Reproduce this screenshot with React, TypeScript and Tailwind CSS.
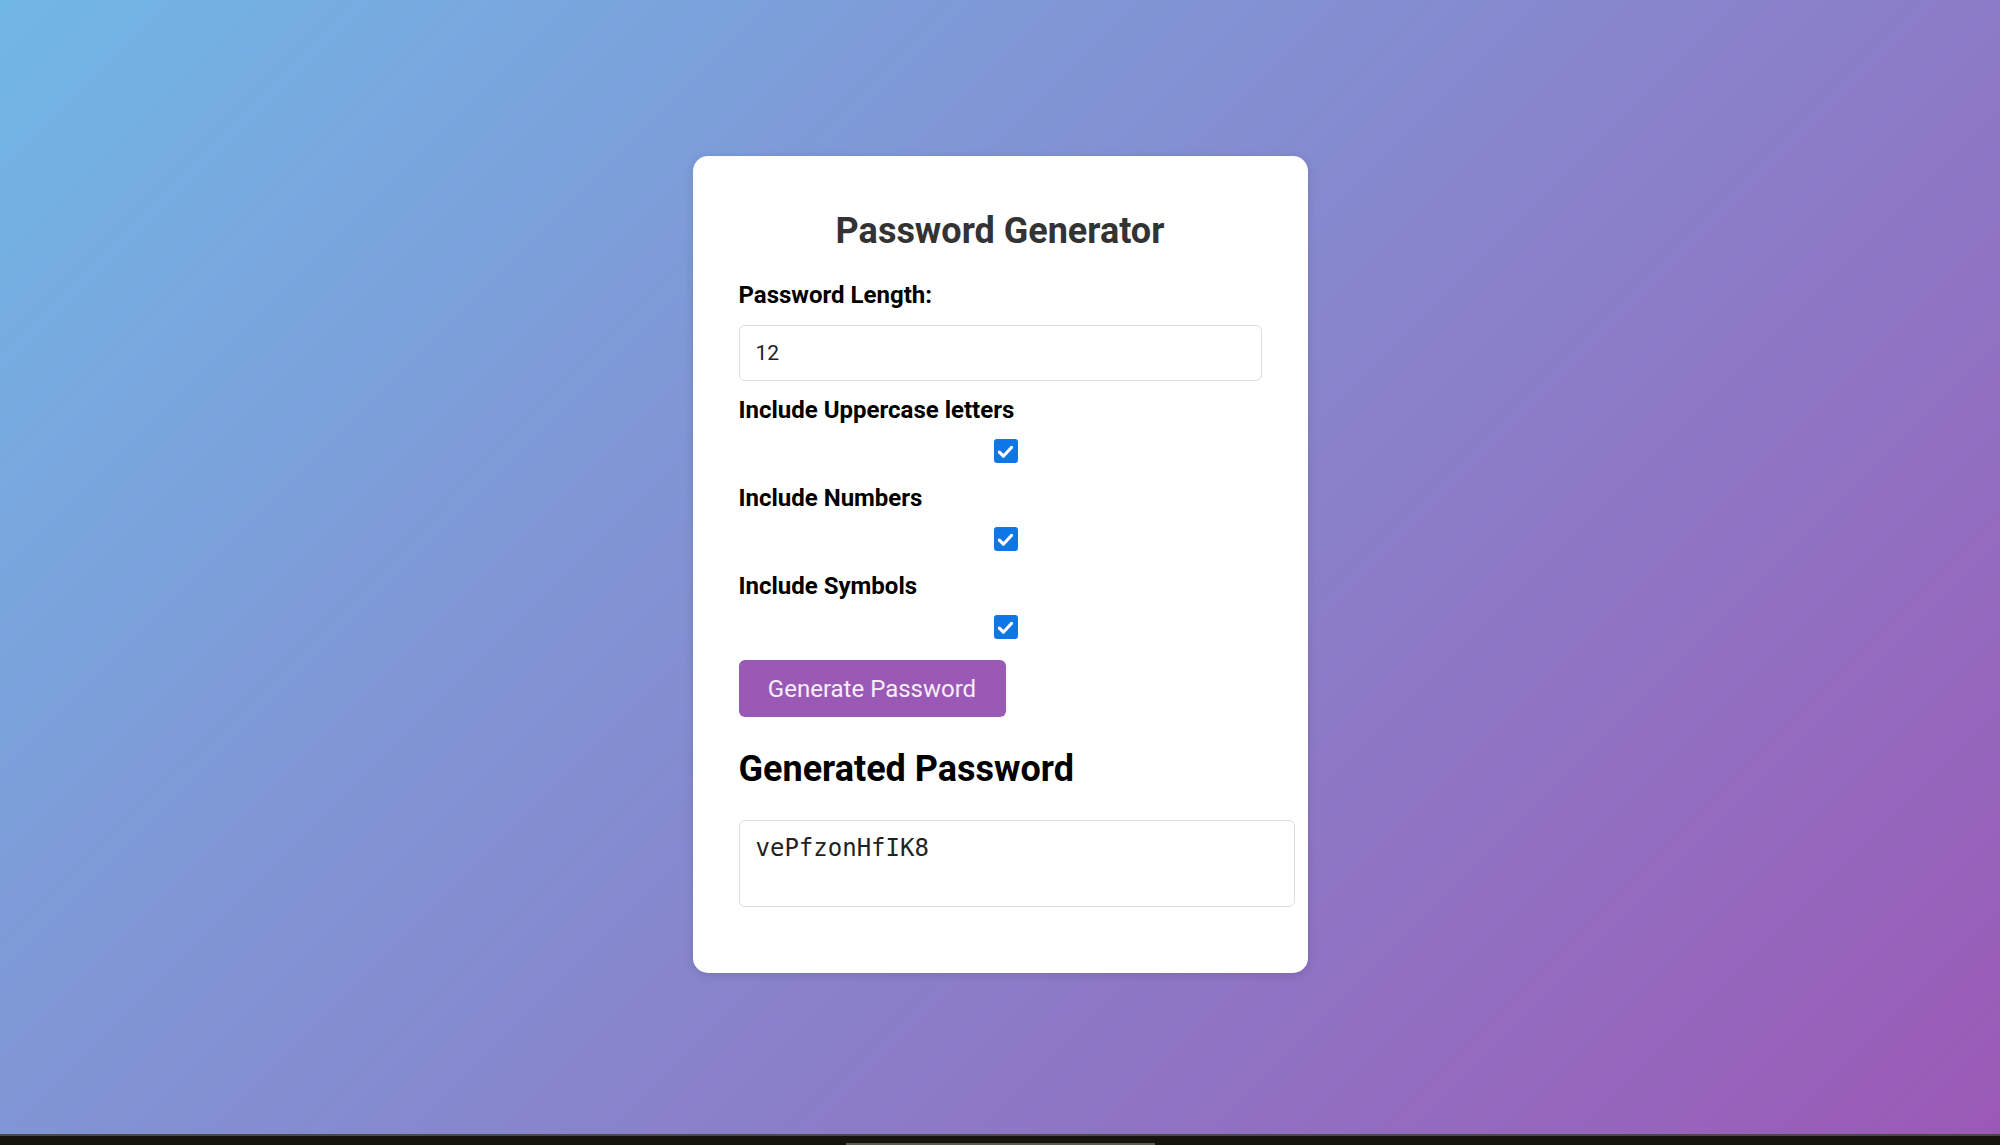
import React, { useState } from "react";

const CheckBox: React.FC<{ checked: boolean; onToggle: () => void }> = ({ checked, onToggle }) => (
  <div className="flex justify-center pl-[11px]">
    <button
      type="button"
      onClick={onToggle}
      className={`flex h-[24px] w-[24px] items-center justify-center rounded-[3px] ${
        checked ? "bg-[#0f76e6]" : "border-2 border-[#767676] bg-white"
      }`}
    >
      {checked && (
        <svg viewBox="0 0 24 24" className="h-[21px] w-[21px]" fill="none">
          <path d="M5 12.8l4.6 4.6L19 7.2" stroke="white" strokeWidth="3.6" strokeLinecap="round" strokeLinejoin="round" />
        </svg>
      )}
    </button>
  </div>
);

export default function App() {
  const [length, setLength] = useState("12");
  const [upper, setUpper] = useState(true);
  const [numbers, setNumbers] = useState(true);
  const [symbols, setSymbols] = useState(true);
  const [password, setPassword] = useState("vePfzonHfIK8");

  const generate = () => {
    let chars = "abcdefghijklmnopqrstuvwxyz";
    if (upper) chars += "ABCDEFGHIJKLMNOPQRSTUVWXYZ";
    if (numbers) chars += "0123456789";
    if (symbols) chars += "!@#$%^&*()_+-=";
    const n = Math.max(1, Math.min(64, parseInt(length) || 12));
    let out = "";
    for (let i = 0; i < n; i++) out += chars[Math.floor(Math.random() * chars.length)];
    setPassword(out);
  };

  return (
    <div className="flex h-[1145px] w-full flex-col font-['Roboto',sans-serif]">
      <main className="flex h-[1134px] items-center justify-center bg-[linear-gradient(135deg,#71b7e6,#9b59b6)] pb-[5px]">
        <div className="flex w-[615px] flex-col rounded-[15px] bg-white px-[46px] pt-[54px] pb-[66px] shadow-[0_2px_10px_rgba(0,0,0,0.12)]">
          <h1 className="text-center text-[36px] font-bold leading-[42px] text-[#333]">Password Generator</h1>

          <label className="mt-[30px] text-[24px] font-bold leading-[27px] text-black">Password Length:</label>
          <input
            type="number"
            value={length}
            onChange={(e) => setLength(e.target.value)}
            className="mt-[16px] h-[56px] w-full rounded-[6px] border border-[#ddd] px-[16px] text-[21px] text-[#222] outline-none [appearance:textfield]"
          />

          <label className="mt-[16px] text-[24px] font-bold leading-[27px] text-black">Include Uppercase letters</label>
          <div className="mt-[15px]">
            <CheckBox checked={upper} onToggle={() => setUpper(!upper)} />
          </div>

          <label className="mt-[22px] text-[24px] font-bold leading-[27px] text-black">Include Numbers</label>
          <div className="mt-[15px]">
            <CheckBox checked={numbers} onToggle={() => setNumbers(!numbers)} />
          </div>

          <label className="mt-[22px] text-[24px] font-bold leading-[27px] text-black">Include Symbols</label>
          <div className="mt-[15px]">
            <CheckBox checked={symbols} onToggle={() => setSymbols(!symbols)} />
          </div>

          <button
            type="button"
            onClick={generate}
            className="mt-[21px] h-[57px] w-[267px] rounded-[6px] bg-[#9b59b6] text-[24px] text-[#f7eefa]"
          >
            Generate Password
          </button>

          <h2 className="mt-[31px] text-[36px] font-bold leading-[42px] text-black">Generated Password</h2>
          <textarea
            readOnly
            value={password}
            className="mt-[30px] h-[87px] w-[556px] resize-none rounded-[6px] border border-[#ddd] px-[16px] pt-[13px] font-['DejaVu_Sans_Mono',monospace] text-[24px] leading-[28px] text-[#222] outline-none"
          />
        </div>
      </main>
      <div className="flex h-[11px] flex-col bg-[#15150d]">
        <div className="h-[2px] bg-[#4a4a45]" />
        <div className="mt-auto flex justify-center">
          <div className="h-[2px] w-[309px] bg-[#5d5d55]" />
        </div>
      </div>
    </div>
  );
}
